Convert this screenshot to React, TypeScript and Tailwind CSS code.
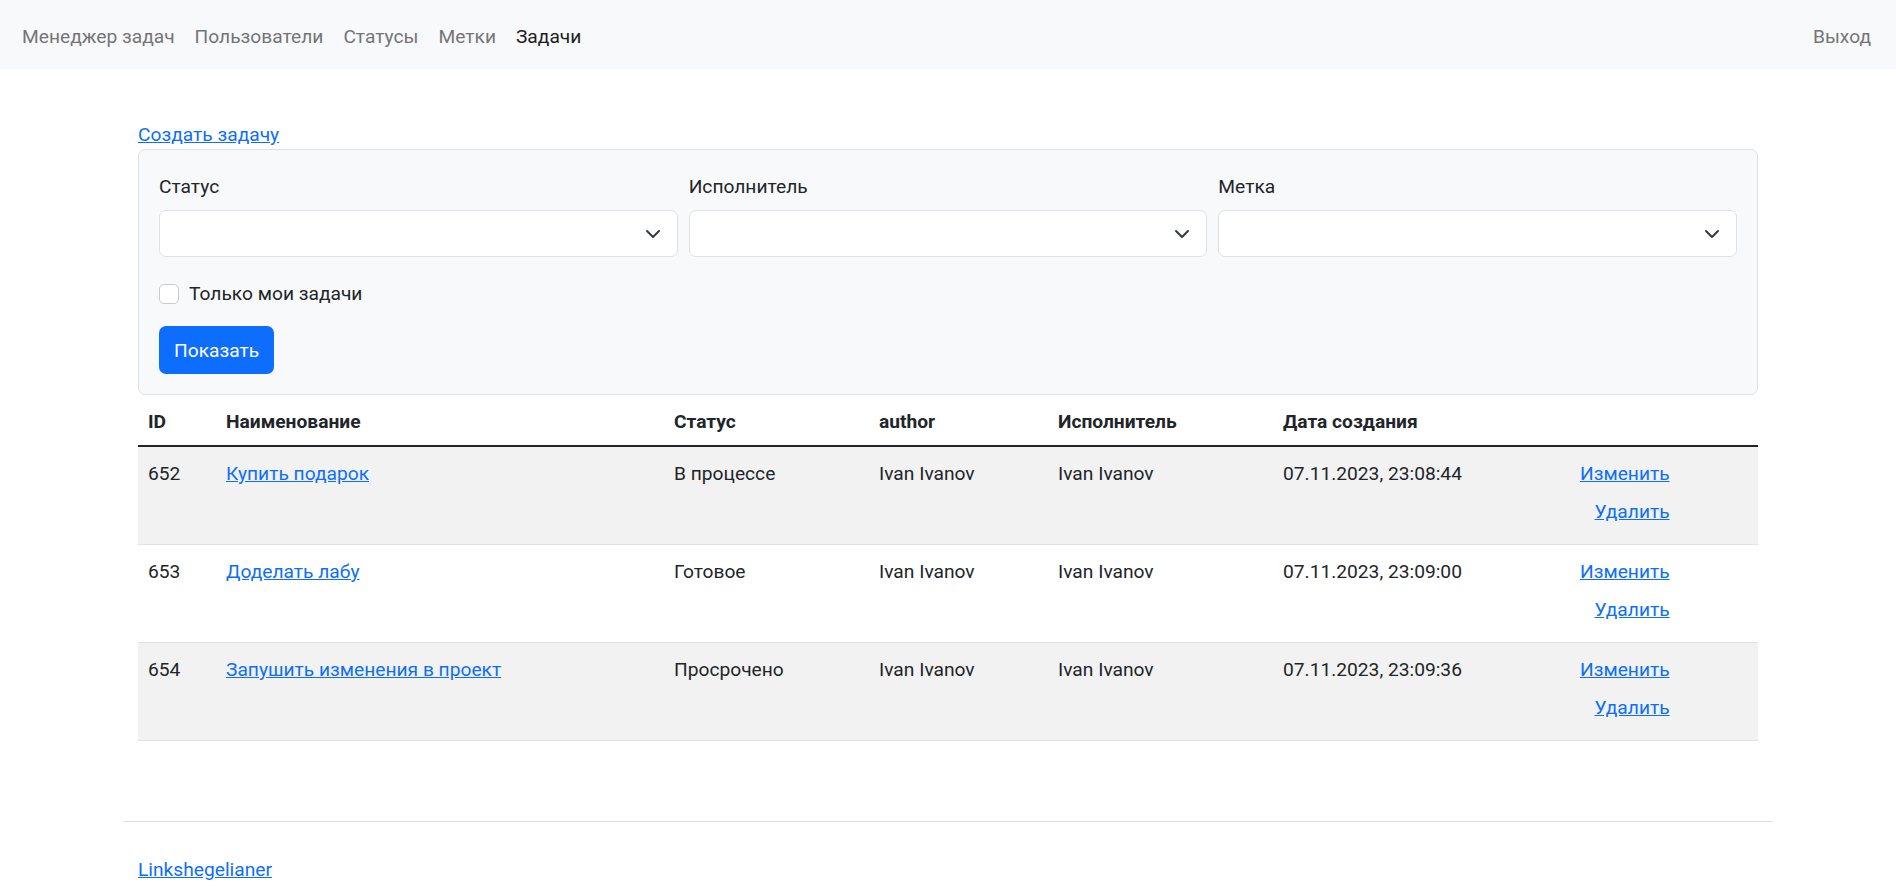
import type { ReactNode } from 'react';

type Task = {
  id: number;
  name: string;
  status: string;
  author: string;
  executor: string;
  createdAt: string;
};

const tasks: Task[] = [
  { id: 652, name: 'Купить подарок', status: 'В процессе', author: 'Ivan Ivanov', executor: 'Ivan Ivanov', createdAt: '07.11.2023, 23:08:44' },
  { id: 653, name: 'Доделать лабу', status: 'Готовое', author: 'Ivan Ivanov', executor: 'Ivan Ivanov', createdAt: '07.11.2023, 23:09:00' },
  { id: 654, name: 'Запушить изменения в проект', status: 'Просрочено', author: 'Ivan Ivanov', executor: 'Ivan Ivanov', createdAt: '07.11.2023, 23:09:36' },
];

function Chevron() {
  return (
    <svg viewBox="0 0 16 16" className="h-[16px] w-[16px]" fill="none" stroke="#343a40" strokeWidth="2" strokeLinecap="round" strokeLinejoin="round">
      <path d="m2 5 6 6 6-6" />
    </svg>
  );
}

function SelectField({ label }: { label: string }) {
  return (
    <div>
      <label className="mb-[8px] block pt-[2px] leading-[30px]">{label}</label>
      <div className="flex h-[47px] items-center justify-end rounded-[7px] border border-[#dee2e6] bg-white pr-[16px]">
        <Chevron />
      </div>
    </div>
  );
}

function NavLink({ children, active = false }: { children: ReactNode; active?: boolean }) {
  return (
    <a href="#" className={`px-[10px] py-[10px] leading-[30px] ${active ? 'text-[#1d1e1f]' : 'text-[#747576]'}`}>
      {children}
    </a>
  );
}

export default function App() {
  return (
    <div className="min-h-screen bg-white text-[19.2px] leading-[30px] text-[#212529]" style={{ fontFamily: 'Roboto, "Noto Sans", sans-serif' }}>
      <nav className="flex h-[69px] items-center justify-between bg-[#f8f9fa] px-[12px] pt-[4px]">
        <div className="flex items-center">
          <NavLink>Менеджер задач</NavLink>
          <NavLink>Пользователи</NavLink>
          <NavLink>Статусы</NavLink>
          <NavLink>Метки</NavLink>
          <NavLink active>Задачи</NavLink>
        </div>
        <div className="pr-[3px]">
          <NavLink>Выход</NavLink>
        </div>
      </nav>

      <main className="mx-auto w-[1650px] px-[15px] pt-[50px]">
        <a href="#" className="block w-fit pt-[2px] leading-[28px] text-[#0d6efd] underline">Создать задачу</a>

        <div className="rounded-[7px] border border-[#dee2e6] bg-[#f8f9fa] p-[20px]">
          <div className="grid grid-cols-3 gap-[11px]">
            <SelectField label="Статус" />
            <SelectField label="Исполнитель" />
            <SelectField label="Метка" />
          </div>
          <label className="mt-[22px] mb-[-2px] flex items-center">
            <span className="mr-[10px] h-[20px] w-[20px] rounded-[5px] border border-[#c9cacb] bg-white" />
            <span>Только мои задачи</span>
          </label>
          <button type="button" className="mt-[19px] h-[48px] rounded-[7px] bg-[#0d6efd] px-[15px] pt-[2px] text-white">
            Показать
          </button>
        </div>

        <table className="w-full table-fixed border-collapse text-left">
          <colgroup>
            <col className="w-[78px]" />
            <col className="w-[448px]" />
            <col className="w-[205px]" />
            <col className="w-[179px]" />
            <col className="w-[225px]" />
            <col className="w-[297px]" />
            <col />
          </colgroup>
          <thead>
            <tr className="border-b-2 border-[#212529]">
              <th className="px-[10px] pt-[12px] pb-[8px] font-bold">ID</th>
              <th className="px-[10px] pt-[12px] pb-[8px] font-bold">Наименование</th>
              <th className="px-[10px] pt-[12px] pb-[8px] font-bold">Статус</th>
              <th className="px-[10px] pt-[12px] pb-[8px] font-bold">author</th>
              <th className="px-[10px] pt-[12px] pb-[8px] font-bold">Исполнитель</th>
              <th className="px-[10px] pt-[12px] pb-[8px] font-bold">Дата создания</th>
              <th className="p-[10px]" />
            </tr>
          </thead>
          <tbody>
            {tasks.map((task, i) => (
              <tr key={task.id} className={`border-b border-[#dee2e6] align-top ${i % 2 === 0 ? 'bg-[#f2f2f2]' : 'bg-white'}`}>
                <td className="px-[10px] pt-[12px] pb-[8px]">{task.id}</td>
                <td className="px-[10px] pt-[12px] pb-[8px]">
                  <a href="#" className="text-[#0d6efd] underline">{task.name}</a>
                </td>
                <td className="px-[10px] pt-[12px] pb-[8px]">{task.status}</td>
                <td className="px-[10px] pt-[12px] pb-[8px]">{task.author}</td>
                <td className="px-[10px] pt-[12px] pb-[8px]">{task.executor}</td>
                <td className="px-[10px] pt-[12px] pb-[8px]">{task.createdAt}</td>
                <td className="px-[10px] pt-[12px] pb-[8px]">
                  <div className="inline-flex flex-col items-end">
                    <a href="#" className="text-[#0d6efd] underline">Изменить</a>
                    <button type="button" className="pt-[8px] pb-[9px] text-[#0d6efd] underline">Удалить</button>
                  </div>
                </td>
              </tr>
            ))}
          </tbody>
        </table>
      </main>

      <footer className="mx-auto mt-[80px] w-[1650px]">
        <hr className="border-t border-[#dfdfdf]" />
        <div className="px-[15px] pt-[33px] pb-[8px]">
          <a href="#" className="text-[#0d6efd] underline">Linkshegelianer</a>
        </div>
      </footer>
    </div>
  );
}
